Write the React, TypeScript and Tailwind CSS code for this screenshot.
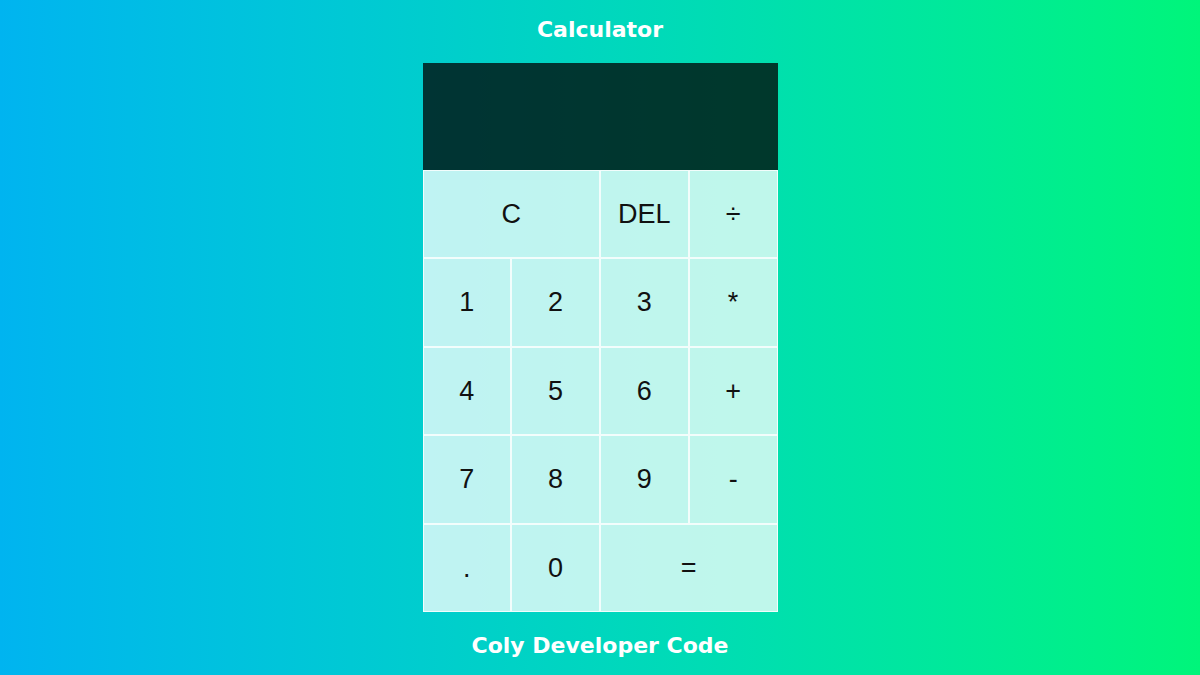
const keys: { label: string; wide?: boolean }[] = [
  { label: 'C', wide: true },
  { label: 'DEL' },
  { label: '÷' },
  { label: '1' },
  { label: '2' },
  { label: '3' },
  { label: '*' },
  { label: '4' },
  { label: '5' },
  { label: '6' },
  { label: '+' },
  { label: '7' },
  { label: '8' },
  { label: '9' },
  { label: '-' },
  { label: '.' },
  { label: '0' },
  { label: '=', wide: true },
];

export default function App() {
  return (
    <div className="flex h-[675px] w-full flex-col items-center bg-gradient-to-r from-[#00b4f0] to-[#00f57a]">
      <h1 className="pt-[17px] font-['DejaVu_Sans',sans-serif] text-[22px] font-bold leading-[26px] text-white">
        Calculator
      </h1>

      <div className="mt-[20px] w-[355px]">
        <div className="h-[107px] bg-black/75" />
        <div className="grid grid-cols-4">
          {keys.map((key) => (
            <button
              key={key.label}
              className={`h-[88.4px] border border-white/80 bg-white/75 font-['Liberation_Sans',sans-serif] text-[27px] text-[#111] ${
                key.wide ? 'col-span-2' : ''
              }`}
            >
              {key.label}
            </button>
          ))}
        </div>
      </div>

      <p className="mt-[21px] font-['DejaVu_Sans',sans-serif] text-[22px] font-bold leading-[26px] text-white">
        Coly Developer Code
      </p>
    </div>
  );
}
